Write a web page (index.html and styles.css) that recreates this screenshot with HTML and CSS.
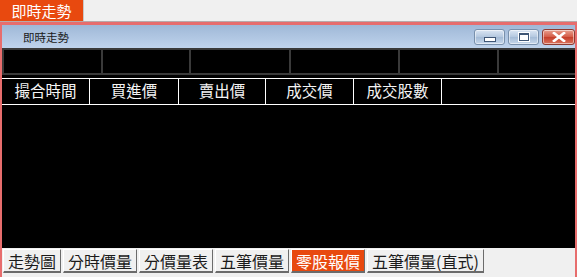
FILE: index.html
```html
<!DOCTYPE html>
<html>
<head>
    <meta charset="UTF-8">
    <title>即時走勢</title>
    <link rel="stylesheet" href="styles.css">
</head>
<body>
    <div class="topbar">
        <div class="toptab">即時走勢</div>
    </div>
    <div class="window">
        <div class="titlebar">
            <div class="caption">即時走勢</div>
            <div class="wbtns">
                <div class="wbtn"><span class="ico-min"></span></div>
                <div class="wbtn"><span class="ico-max"></span></div>
                <div class="wbtn close">
                    <svg width="14" height="10" viewBox="0 0 14 10"><path d="M2 1 L12 9 M12 1 L2 9" stroke="#fff" stroke-width="2.6" stroke-linecap="square"/></svg>
                </div>
            </div>
        </div>
        <div class="board">
            <div class="strip">
                <div class="cell"></div>
                <div class="cell"></div>
                <div class="cell"></div>
                <div class="cell"></div>
                <div class="cell"></div>
                <div class="cell"></div>
            </div>
            <div class="heads">
                <div class="head">撮合時間</div>
                <div class="head">買進價</div>
                <div class="head">賣出價</div>
                <div class="head">成交價</div>
                <div class="head">成交股數</div>
                <div class="head rest"></div>
            </div>
        </div>
        <div class="tabs">
            <div class="tab">走勢圖</div>
            <div class="tab">分時價量</div>
            <div class="tab">分價量表</div>
            <div class="tab">五筆價量</div>
            <div class="tab on">零股報價</div>
            <div class="tab">五筆價量(直式)</div>
        </div>
    </div>
</body>
</html>
```
FILE: styles.css
```css
body {
    margin: 0;
    padding: 0;
    background: #f0f0f0;
    font-family: "Noto Sans CJK TC", "Noto Sans", sans-serif;
    width: 577px;
    height: 277px;
    overflow: hidden;
}
.topbar {
    height: 21px;
    display: flex;
    border-bottom: 1px solid #b9a9a9;
}
.toptab {
    width: 84px;
    background: #e8490f;
    color: #fff;
    font-size: 15px;
    line-height: 21px;
    text-align: center;
    border-right: 1px solid #c8c8c8;
    box-sizing: border-box;
}
.window {
    border: 2px solid #e76d6d;
    border-top-width: 3px;
    border-bottom: none;
    height: 255px;
    display: flex;
    flex-direction: column;
}
.titlebar {
    height: 23px;
    background: linear-gradient(#9fb8d7, #bfd3ec);
    display: flex;
    align-items: center;
}
.caption {
    font-size: 11.5px;
    color: #1a1a1a;
    margin-left: 21px;
}
.wbtns {
    margin-left: auto;
    display: flex;
    gap: 3px;
    margin-top: 1px;
}
.wbtn {
    width: 29px;
    height: 14px;
    border: 1px solid #7890ac;
    border-radius: 3px;
    background: linear-gradient(#dbe6f3, #b3c7df 50%, #a4bbd6 51%, #c6d7eb);
    box-shadow: inset 0 0 0 1px rgba(255,255,255,0.5);
    display: flex;
    align-items: center;
    justify-content: center;
}
.wbtn.close {
    width: 31px;
    border-color: #8e3a30;
    background: linear-gradient(#e9a08f, #d45a45 50%, #c63d28 51%, #d8725c);
}
.ico-min {
    width: 10px;
    height: 3px;
    background: #fff;
    border: 1px solid #3f5675;
    margin-top: 4px;
}
.ico-max {
    width: 8px;
    height: 5px;
    border: 1px solid #3f5675;
    border-top-width: 2px;
    background: #fff;
    box-shadow: 0 0 0 1px #fff;
}
.board {
    height: 200px;
    background: #000;
}
.strip {
    display: grid;
    grid-template-columns: 99px 88px 100px 109px 99px 1fr;
    height: 27px;
    border-top: 2px solid #3a3a3a;
    border-bottom: 2px solid #3a3a3a;
    box-sizing: border-box;
}
.cell {
    border-left: 2px solid #3a3a3a;
}
.heads {
    display: grid;
    grid-template-columns: 88px 89px 87px 88px 88px 1fr;
    margin-top: 3px;
    height: 25px;
    border-top: 1px solid #fff;
    border-bottom: 1px solid #fff;
}
.head {
    color: #f4f4f4;
    font-size: 15.5px;
    line-height: 23px;
    text-align: center;
    border-right: 1px solid #fff;
}
.head.rest {
    border-right: none;
}
.tabs {
    display: flex;
    gap: 2px;
    padding: 1px 0 0 1px;
}
.tab {
    height: 24px;
    line-height: 22px;
    font-size: 16px;
    color: #1b1b1b;
    padding: 0 4px;
    background: #f0f0f0;
    border: 1px solid #fff;
    border-right-color: #6b6b6b;
    border-bottom: 2px solid #6b6b6b;
    box-sizing: border-box;
}
.tab.on {
    background: #e8490f;
    color: #fff;
}
```
